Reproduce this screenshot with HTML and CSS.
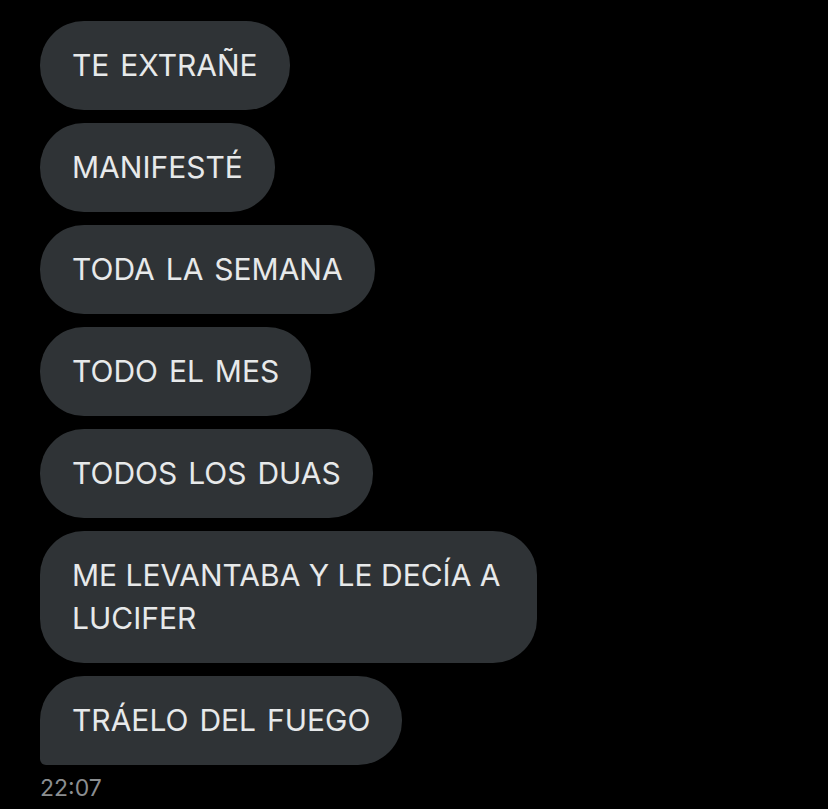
FILE: index.html
```html
<!DOCTYPE html>
<html lang="es">
<head>
    <meta charset="UTF-8">
    <meta name="viewport" content="width=device-width, initial-scale=1.0">
    <title>Mensajes</title>
    <link rel="stylesheet" href="styles.css">
</head>
<body>
    <div class="chat">
        <div class="bubble">TE EXTRAÑE</div>
        <div class="bubble">MANIFESTÉ</div>
        <div class="bubble">TODA LA SEMANA</div>
        <div class="bubble">TODO EL MES</div>
        <div class="bubble">TODOS LOS DUAS</div>
        <div class="bubble long">ME LEVANTABA Y LE DECÍA A LUCIFER</div>
        <div class="bubble last">TRÁELO DEL FUEGO</div>
        <div class="time">22:07</div>
    </div>
</body>
</html>
```

FILE: styles.css
```css
body {
    margin: 0;
    background-color: #000;
    font-family: Inter, 'Liberation Sans', sans-serif;
}
.chat {
    display: flex;
    flex-direction: column;
    align-items: flex-start;
    gap: 13px;
    padding: 21px 40px 0;
}
.bubble {
    box-sizing: border-box;
    max-width: 497px;
    padding: 23px 32px;
    background-color: #2f3336;
    color: #e7e9ea;
    font-size: 30px;
    line-height: 43px;
    word-spacing: 2.5px;
    border-radius: 44px;
}
.bubble.long {
    word-spacing: 0;
}
.bubble.last {
    border-bottom-left-radius: 6px;
}
.time {
    margin-top: -4px;
    color: #8b8e91;
    font-size: 23px;
    line-height: 28px;
}
```
